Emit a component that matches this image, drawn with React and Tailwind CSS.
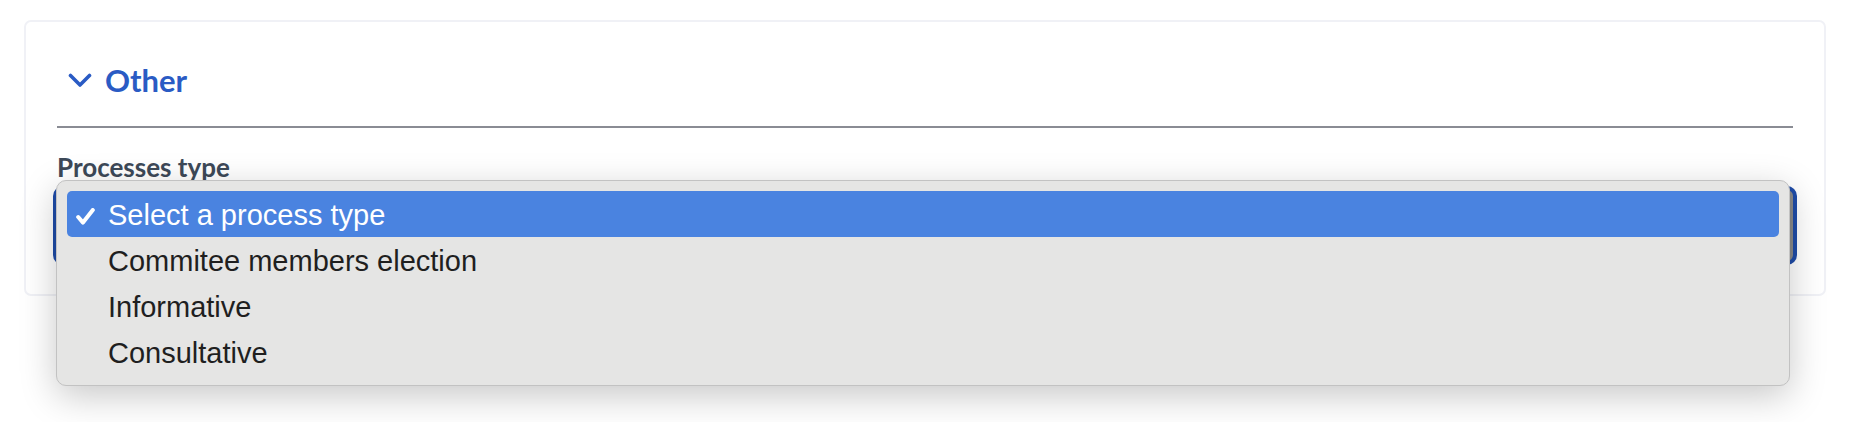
import React, { useState } from "react";

const options = [
  "Select a process type",
  "Commitee members election",
  "Informative",
  "Consultative",
];

const ChevronDown = () => (
  <svg width="24" height="15" viewBox="0 0 24 15" fill="none">
    <polyline
      points="2.5,2.5 12,12 21.5,2.5"
      stroke="#2a5bc4"
      strokeWidth="3.6"
      strokeLinecap="round"
      strokeLinejoin="round"
    />
  </svg>
);

const Check = () => (
  <svg width="19" height="17" viewBox="0 0 19 17" fill="none">
    <polyline
      points="2.2,9 7,14.6 16.8,2"
      stroke="#ffffff"
      strokeWidth="4"
      strokeLinecap="round"
      strokeLinejoin="round"
    />
  </svg>
);

const App = () => {
  const [selected, setSelected] = useState(0);

  return (
    <div className="min-h-screen bg-white pt-[20px] pl-[24px] pr-[34px]">
      <div className="h-[276px] rounded-[7px] border-2 border-[#f0f1f6] px-[31px]">
        {/* accordion header */}
        <div className="flex h-[106px] items-center gap-[13px] pl-[11px] pt-[12px] border-b-2 border-[#8a8c94]">
          <ChevronDown />
          <span className="font-['Lato',sans-serif] text-[31px] font-bold text-[#2a5bc4]">
            Other
          </span>
        </div>

        <label className="mt-[24px] block font-['Lato',sans-serif] text-[26px] font-bold leading-[30px] text-[#3d4958]">
          Processes type
        </label>

        <div className="relative mt-[8px]">
          <div className="h-[71px] rounded-[6px] border-[3px] border-[#8a8a8a] bg-white ring-4 ring-[#1f4ca8]" />

          {/* open native-style menu */}
          <div className="absolute left-[-1px] top-[-10px] w-[1734px] rounded-[10px] border border-[#c2c2c2] bg-[#e5e5e4] p-[10px] shadow-[0_10px_36px_rgba(0,0,0,0.22)] font-['Liberation_Sans',Arial,sans-serif] text-[29px]">
            {options.map((opt, i) => (
              <div
                key={opt}
                onClick={() => setSelected(i)}
                className={
                  i === selected
                    ? "flex h-[46px] items-center rounded-[5px] bg-[#4a83e0] pl-[9px] pt-[2px] text-white"
                    : "flex h-[46px] items-center rounded-[5px] pl-[9px] pt-[2px] text-[#1f1f1f]"
                }
              >
                <span className="flex w-[32px] items-center pt-[2px]">
                  {i === selected && <Check />}
                </span>
                <span className="leading-none">{opt}</span>
              </div>
            ))}
          </div>
        </div>
      </div>
    </div>
  );
};

export default App;
